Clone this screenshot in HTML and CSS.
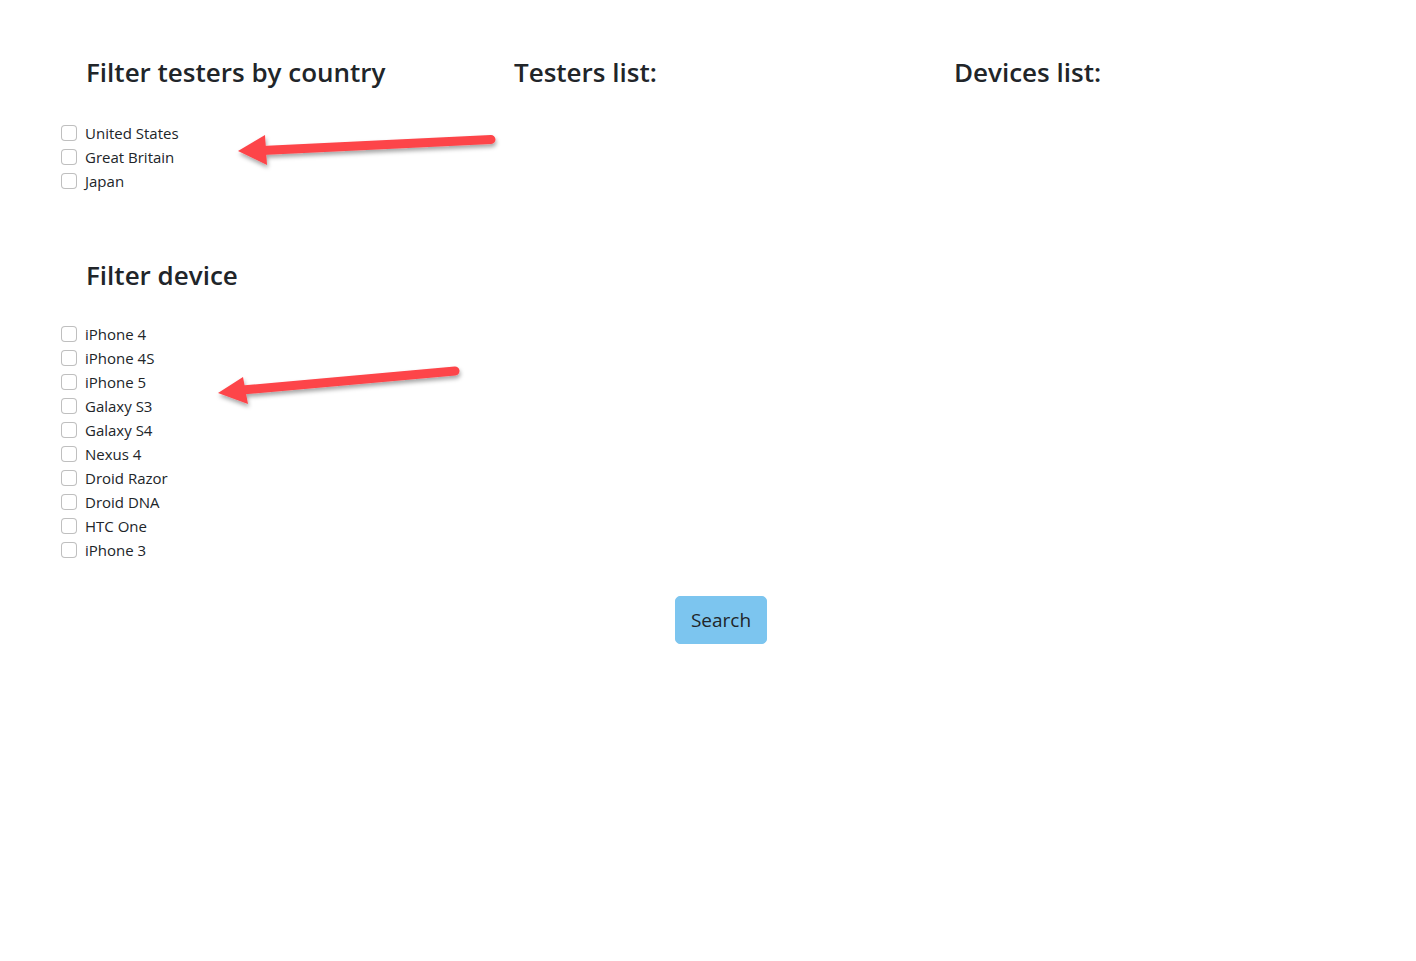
FILE: index.html
```html
<!DOCTYPE html>
<html lang="en">
<head>
<meta charset="utf-8">
<title>Testers</title>
<link rel="stylesheet" href="styles.css">
</head>
<body>
<div class="page">
  <div class="container">
    <div class="row">
      <div class="col col-filters">
        <h3 class="title title-first">Filter testers by country</h3>
        <div class="checks">
          <label class="check"><input type="checkbox" class="box"><span>United States</span></label>
          <label class="check"><input type="checkbox" class="box"><span>Great Britain</span></label>
          <label class="check"><input type="checkbox" class="box"><span>Japan</span></label>
        </div>
        <h3 class="title title-first title-device">Filter device</h3>
        <div class="checks">
          <label class="check"><input type="checkbox" class="box"><span>iPhone 4</span></label>
          <label class="check"><input type="checkbox" class="box"><span>iPhone 4S</span></label>
          <label class="check"><input type="checkbox" class="box"><span>iPhone 5</span></label>
          <label class="check"><input type="checkbox" class="box"><span>Galaxy S3</span></label>
          <label class="check"><input type="checkbox" class="box"><span>Galaxy S4</span></label>
          <label class="check"><input type="checkbox" class="box"><span>Nexus 4</span></label>
          <label class="check"><input type="checkbox" class="box"><span>Droid Razor</span></label>
          <label class="check"><input type="checkbox" class="box"><span>Droid DNA</span></label>
          <label class="check"><input type="checkbox" class="box"><span>HTC One</span></label>
          <label class="check"><input type="checkbox" class="box"><span>iPhone 3</span></label>
        </div>
      </div>
      <div class="col">
        <h3 class="title">Testers list:</h3>
      </div>
      <div class="col">
        <h3 class="title">Devices list:</h3>
      </div>
    </div>
    <div class="actions">
      <button type="button" class="btn">Search</button>
    </div>
  </div>
  <svg class="arrows" width="1416" height="961" viewBox="0 0 1416 961" aria-hidden="true">
    <defs>
      <filter id="shadow" x="-10%" y="-50%" width="120%" height="200%">
        <feDropShadow dx="1" dy="3" stdDeviation="2" flood-color="#000" flood-opacity="0.35"/>
      </filter>
    </defs>
    <g filter="url(#shadow)" fill="#fd454a" stroke="#fd454a">
      <line x1="262" y1="150.5" x2="491" y2="139.5" stroke-width="9" stroke-linecap="round"/>
      <polygon points="238,151 265,135 267,165" stroke="none"/>
      <line x1="242" y1="390" x2="455" y2="371" stroke-width="9" stroke-linecap="round"/>
      <polygon points="218,393 243,377 248,404" stroke="none"/>
    </g>
  </svg>
</div>
</body>
</html>
```

FILE: styles.css
```css
* { box-sizing: border-box; }

body {
  margin: 0;
  font-family: "Open Sans", "Liberation Sans", sans-serif;
  font-size: 16px;
  line-height: 1.5;
  color: #212529;
  background: #fff;
}

.page {
  position: relative;
  min-height: 961px;
}

.container {
  width: 1320px;
  margin: 0 auto;
  padding: 57px 12px 0;
}

.row {
  display: grid;
  grid-template-columns: 440px 440px 1fr;
}

.title {
  margin: 0;
  font-size: 26px;
  font-weight: 600;
  line-height: 31px;
  padding-left: 14px;
}

.title-first {
  padding-left: 26px;
  margin-bottom: 33px;
}

.title-device {
  margin-top: 67px;
  margin-bottom: 31px;
}

.checks {
  display: flex;
  flex-direction: column;
}

.check {
  display: flex;
  align-items: flex-start;
  line-height: 24px;
  font-size: 15px;
}

.box {
  appearance: none;
  -webkit-appearance: none;
  width: 16px;
  height: 16px;
  margin: 4px 8px 0 1px;
  border: 1px solid rgba(0, 0, 0, 0.25);
  border-radius: 4px;
  background: #fff;
  flex: none;
}

.actions {
  padding: 34px 0 0 615px;
}

.btn {
  font-family: inherit;
  font-size: 19px;
  line-height: 30px;
  padding: 8px 0;
  color: #212529;
  background: #7cc5ef;
  border: 1px solid #7cc5ef;
  border-radius: 5px;
  width: 92px;
  text-align: center;
}

.arrows {
  position: absolute;
  top: 0;
  left: 0;
  pointer-events: none;
}
```
